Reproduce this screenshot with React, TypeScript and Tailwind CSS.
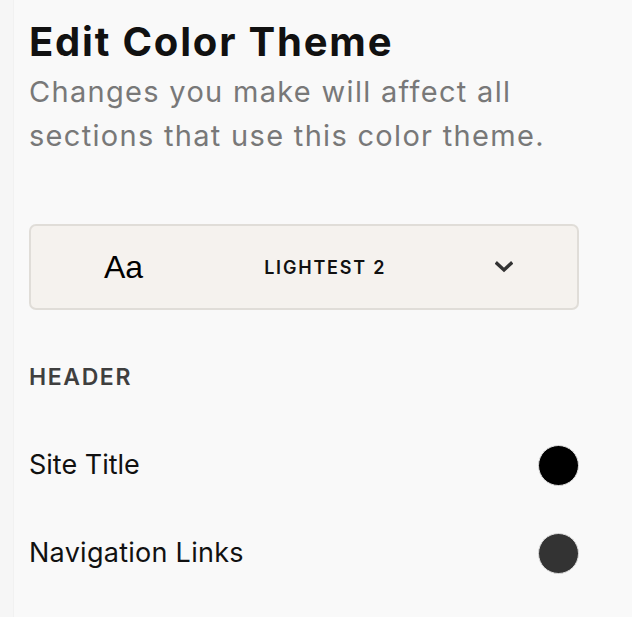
import React from "react";

export default function App() {
  return (
    <div
      className="w-[632px] h-[617px] bg-[#f9f9f9] overflow-hidden flex"
      style={{ fontFamily: "Inter, 'Noto Sans', sans-serif" }}
    >
      <div className="w-[14px] shrink-0 bg-[#f6f6f6] border-r border-[#f1f1f1]" />
      <div className="flex-1 pl-[15px] pr-[53px] pt-[18px]">
        <h1 className="text-[40px] leading-[48px] font-bold text-[#111] tracking-[0.045em]">
          Edit Color Theme
        </h1>
        <p className="mt-[4px] text-[29px] leading-[44px] text-[#787878] tracking-[0.045em]">
          Changes you make will affect all
          <br />
          sections that use this color theme.
        </p>

        <div className="mt-[66px] h-[86px] rounded-[7px] border-2 border-[#e0ddd8] bg-[#f5f2ee] flex items-center pl-[73px] pr-[64px]">
          <span
            className="text-[32px] leading-none text-black"
            style={{ fontFamily: "'Liberation Sans', Arial, sans-serif" }}
          >
            Aa
          </span>
          <span className="ml-[121px] text-[18px] font-semibold tracking-[0.1em] text-[#111]">
            LIGHTEST 2
          </span>
          <svg
            className="ml-auto"
            width="18"
            height="12"
            viewBox="0 0 18 12"
            fill="none"
          >
            <path
              d="M2 2.5 L9 9 L16 2.5"
              stroke="#333"
              strokeWidth="3.4"
              strokeLinecap="square"
            />
          </svg>
        </div>

        <div className="mt-[53px] text-[23px] leading-[28px] font-semibold tracking-[0.07em] text-[#3f3f3f]">
          HEADER
        </div>

        <div className="mt-[52px] flex items-center justify-between h-[44px]">
          <span className="text-[27px] text-[#111]">Site Title</span>
          <span className="w-[41px] h-[41px] rounded-full bg-black border border-[#ddd]" />
        </div>
        <div className="mt-[44px] flex items-center justify-between h-[44px]">
          <span className="text-[27px] text-[#111] tracking-[0.01em]">Navigation Links</span>
          <span className="w-[41px] h-[41px] rounded-full bg-[#333] border border-[#ddd]" />
        </div>
      </div>
    </div>
  );
}
